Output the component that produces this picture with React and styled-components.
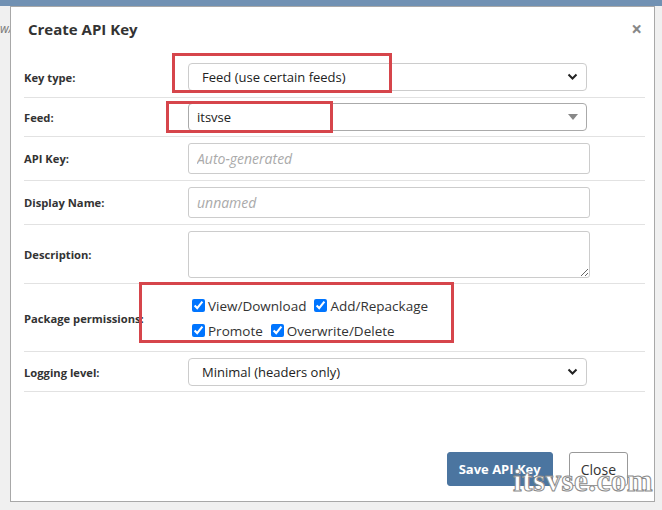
import styled, { createGlobalStyle } from 'styled-components';

const GlobalStyle = createGlobalStyle`
  html, body {
    margin: 0;
    padding: 0;
    background: #f0f0f0;
    font-family: "Open Sans", "Liberation Sans", sans-serif;
    color: #333;
  }
`;

const TopBar = styled.div`
  height: 6px;
  background: #7191b3;
`;

const Stage = styled.div`
  display: flex;
  align-items: flex-start;
`;

const PageEdge = styled.div`
  width: 10px;
  overflow: hidden;
  padding-top: 14px;
  font-size: 12px;
  font-style: italic;
  color: #777;
  white-space: nowrap;
`;

const Dialog = styled.div`
  position: relative;
  width: 643px;
  height: 494px;
  background: #fff;
  border: 1px solid #a8a8a8;
  display: flex;
  flex-direction: column;
`;

const Header = styled.div`
  display: flex;
  align-items: center;
  justify-content: space-between;
  height: 44px;
  padding: 0 12px 6px 17px;
`;

const Title = styled.h2`
  margin: 0;
  font-size: 15px;
  font-weight: 700;
  color: #333;
`;

const CloseX = styled.span`
  font-size: 19px;
  font-weight: 700;
  color: #888;
  line-height: 1;
`;

const Body = styled.div`
  padding: 0 9px 0 13px;
`;

const Row = styled.div`
  display: grid;
  grid-template-columns: 164px 1fr;
  align-items: center;
  padding: ${({ $pad }) => $pad || '6px 0'};
  border-top: ${({ $first }) => ($first ? 'none' : '1px solid #e2e2e2')};
  border-bottom: ${({ $last }) => ($last ? '1px solid #e2e2e2' : 'none')};
`;

const Label = styled.label`
  font-size: 11.2px;
  font-weight: 700;
  color: #333;
`;

const Select = styled.div`
  position: relative;
  box-sizing: border-box;
  width: 399px;
  height: 28px;
  display: flex;
  align-items: center;
  padding-left: ${({ $plain }) => ($plain ? '8px' : '13px')};
  border: 1px solid ${({ $plain }) => ($plain ? '#aaa' : '#ccc')};
  border-radius: 4px;
  font-size: 13px;
  color: #222;
`;

const Arrow = styled.svg`
  position: absolute;
  right: 8px;
  top: 50%;
  transform: translateY(-50%);
`;

const Input = styled.input`
  box-sizing: border-box;
  width: 402px;
  height: 31px;
  padding: 0 8px;
  border: 1px solid #ccc;
  border-radius: 3px;
  font-family: inherit;
  font-size: 14px;
  &::placeholder {
    color: #aaa;
    font-style: italic;
  }
`;

const TextArea = styled.textarea`
  box-sizing: border-box;
  width: 402px;
  height: 47px;
  display: block;
  border: 1px solid #ccc;
  border-radius: 3px;
  font-family: inherit;
`;

const Perms = styled.div`
  display: flex;
  flex-direction: column;
  padding-left: 4px;
`;

const PermLine = styled.div`
  display: flex;
  align-items: center;
  height: 25px;
  gap: 8px;
`;

const Check = styled.label`
  display: flex;
  align-items: center;
  gap: 3px;
  font-size: 13.5px;
  color: #333;
  input {
    margin: 0;
    width: 13px;
    height: 13px;
  }
`;

const Footer = styled.div`
  margin-top: auto;
  display: flex;
  justify-content: flex-end;
  gap: 16px;
  padding: 0 26px 15px 0;
`;

const Button = styled.button`
  height: 34px;
  padding: 0 ${({ $primary }) => ($primary ? '11px' : '11px')};
  font-family: inherit;
  font-size: ${({ $primary }) => ($primary ? '13px' : '14px')};
  font-weight: ${({ $primary }) => ($primary ? 700 : 400)};
  color: ${({ $primary }) => ($primary ? '#fff' : '#333')};
  background: ${({ $primary }) => ($primary ? '#4b75a0' : '#fff')};
  border: 1px solid ${({ $primary }) => ($primary ? '#4b75a0' : '#999')};
  border-radius: 3px;
`;

const Marker = styled.div`
  position: absolute;
  box-sizing: border-box;
  border: 3px solid #d6454b;
  pointer-events: none;
`;

const Watermark = styled.div`
  position: absolute;
  left: 502px;
  top: 456px;
  font-family: "Liberation Serif", "DejaVu Serif", serif;
  font-size: 31px;
  font-weight: 700;
  color: #fff;
  -webkit-text-stroke: 1px #8a8a8a;
  letter-spacing: 0.5px;
`;

const Chevron = () => (
  <Arrow width="11" height="8" viewBox="0 0 11 8">
    <path d="M1.5 1.5 L5.5 5.5 L9.5 1.5" fill="none" stroke="#222" strokeWidth="2" />
  </Arrow>
);

const Triangle = () => (
  <Arrow width="10" height="6" viewBox="0 0 10 6">
    <path d="M0 0 H10 L5 6 Z" fill="#888" />
  </Arrow>
);

const permissions = [
  ['View/Download', 'Add/Repackage'],
  ['Promote', 'Overwrite/Delete'],
];

const App = () => (
  <>
    <GlobalStyle />
    <TopBar />
    <Stage>
      <PageEdge>w/</PageEdge>
      <Dialog>
        <Header>
          <Title>Create API Key</Title>
          <CloseX>×</CloseX>
        </Header>
        <Body>
          <Row $first>
            <Label>Key type:</Label>
            <Select>
              Feed (use certain feeds)
              <Chevron />
            </Select>
          </Row>
          <Row $pad="5px 0">
            <Label>Feed:</Label>
            <Select $plain>
              itsvse
              <Triangle />
            </Select>
          </Row>
          <Row>
            <Label>API Key:</Label>
            <Input placeholder="Auto-generated" />
          </Row>
          <Row>
            <Label>Display Name:</Label>
            <Input placeholder="unnamed" />
          </Row>
          <Row $pad="6px 0 5px">
            <Label>Description:</Label>
            <TextArea />
          </Row>
          <Row $pad="9px 0 8px">
            <Label>Package permissions:</Label>
            <Perms>
              {permissions.map((line) => (
                <PermLine key={line[0]}>
                  {line.map((p) => (
                    <Check key={p}>
                      <input type="checkbox" defaultChecked />
                      {p}
                    </Check>
                  ))}
                </PermLine>
              ))}
            </Perms>
          </Row>
          <Row $pad="6px 0 5px" $last>
            <Label>Logging level:</Label>
            <Select>
              Minimal (headers only)
              <Chevron />
            </Select>
          </Row>
        </Body>
        <Footer>
          <Button $primary>Save API Key</Button>
          <Button>Close</Button>
        </Footer>
        <Marker style={{ left: 161, top: 46, width: 220, height: 40 }} />
        <Marker style={{ left: 155, top: 94, width: 167, height: 32 }} />
        <Marker style={{ left: 128, top: 275, width: 315, height: 61 }} />
        <Watermark>itsvse.com</Watermark>
      </Dialog>
    </Stage>
  </>
);

export default App;
